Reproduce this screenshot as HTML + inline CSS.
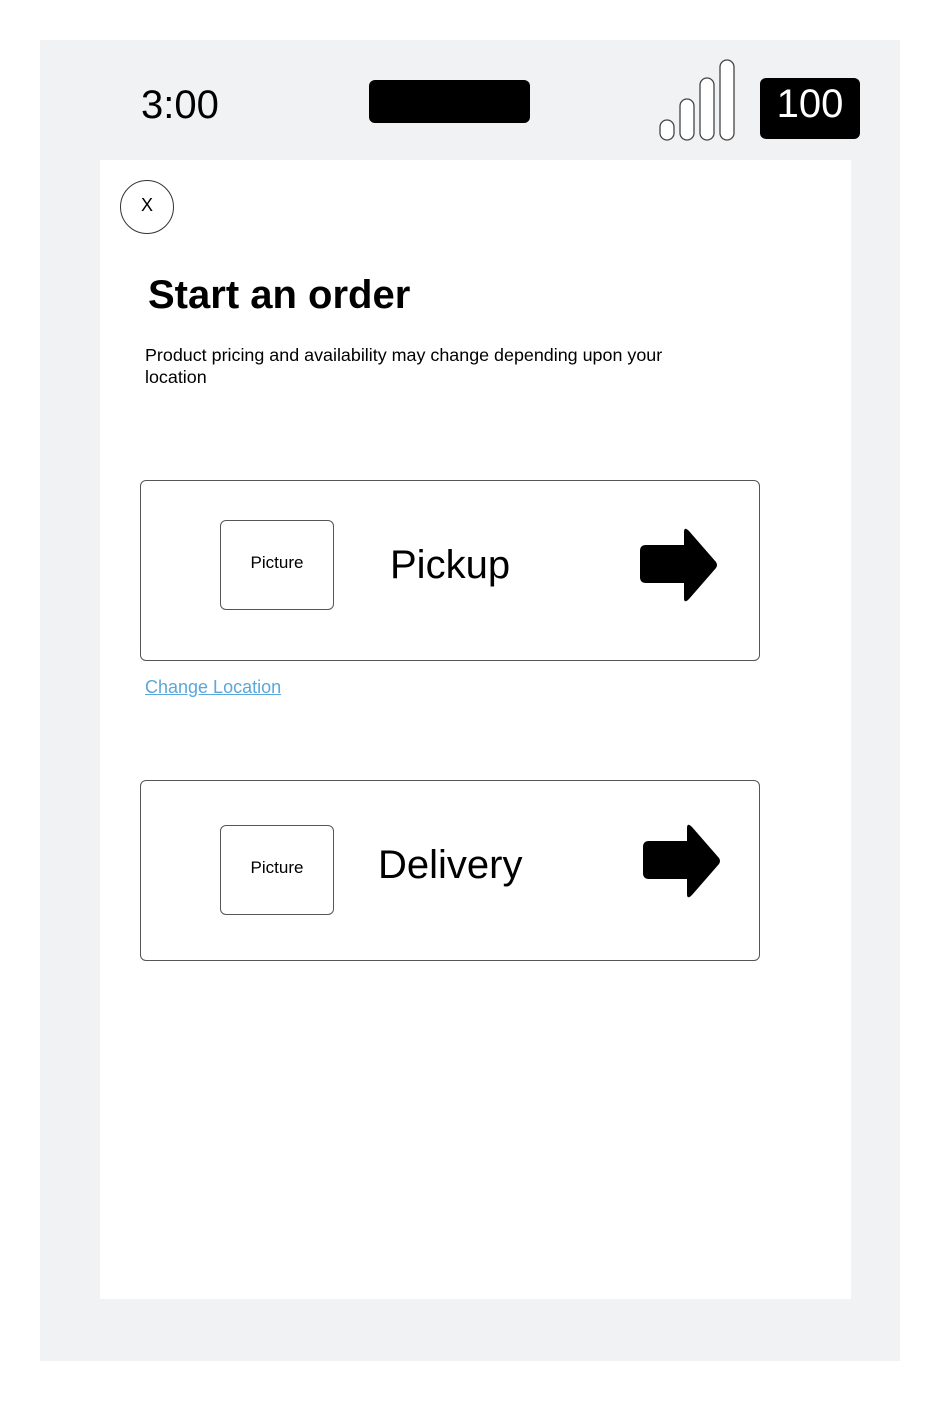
<!DOCTYPE html>
<html><head><style>
body{margin:0;width:940px;height:1402px;background:#fff;font-family:"Liberation Sans",sans-serif;position:relative}
.a{position:absolute}
.card{position:absolute;left:140px;width:620px;height:181px;border:1px solid #555;border-radius:6px;box-sizing:border-box}
.pic{position:absolute;width:114px;height:90px;border:1px solid #555;border-radius:6px;box-sizing:border-box;font-size:17px;display:flex;align-items:center;justify-content:center;padding-bottom:4px}
</style></head><body>
<div class="a" style="left:40px;top:40px;width:860px;height:1321px;background:#f1f2f4"></div>
<div class="a" style="left:100px;top:160px;width:751px;height:1139px;background:#fff"></div>
<div class="a" style="left:141px;top:83px;font-size:40px">3:00</div>
<div class="a" style="left:369px;top:80px;width:161px;height:43px;background:#000;border-radius:6px"></div>
<svg class="a" style="left:655px;top:55px" width="85" height="90">
<g fill="#fff" stroke="#444" stroke-width="1.3">
<rect x="5" y="65" width="14" height="20" rx="7"/>
<rect x="25" y="44" width="14" height="41" rx="7"/>
<rect x="45" y="23" width="14" height="62" rx="7"/>
<rect x="65" y="5" width="14" height="80" rx="7"/></g></svg>
<div class="a" style="left:760px;top:78px;width:100px;height:61px;background:#000;border-radius:6px;color:#fff;font-size:40px;text-align:center;line-height:52px">100</div>
<div class="a" style="left:120px;top:180px;width:52px;height:52px;border:1px solid #333;border-radius:50%;text-align:center;line-height:48px;font-size:18px">X</div>
<div class="a" style="left:148px;top:273px;font-size:40px;font-weight:bold">Start an order</div>
<div class="a" style="left:145px;top:344px;width:560px;font-size:17.9px;line-height:22px">Product pricing and availability may change depending upon your location</div>
<div class="card" style="top:480px"></div>
<div class="pic" style="left:220px;top:520px">Picture</div>
<div class="a" style="left:390px;top:543px;font-size:40px">Pickup</div>
<svg class="a" style="left:638px;top:526px" width="82" height="78"><path d="M8 19H46V6Q46 0 51 5L78 36Q80 39 78 42L51 73Q46 78 46 72V57H8Q2 57 2 51V25Q2 19 8 19Z"/></svg>
<div class="a" style="left:145px;top:677px;font-size:18px;color:#5aa7dc;text-decoration:underline">Change Location</div>
<div class="card" style="top:780px"></div>
<div class="pic" style="left:220px;top:825px">Picture</div>
<div class="a" style="left:378px;top:843px;font-size:40px">Delivery</div>
<svg class="a" style="left:641px;top:822px" width="82" height="78"><path d="M8 19H46V6Q46 0 51 5L78 36Q80 39 78 42L51 73Q46 78 46 72V57H8Q2 57 2 51V25Q2 19 8 19Z"/></svg>
</body></html>
